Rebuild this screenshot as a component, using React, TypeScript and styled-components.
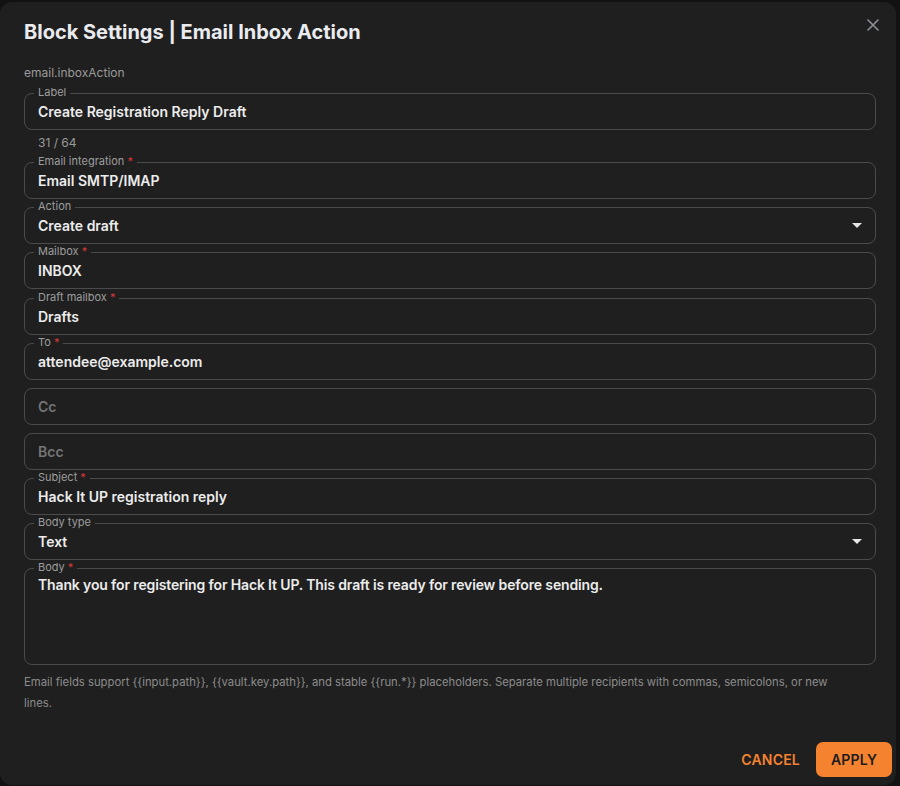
import React from "react";
import styled, { createGlobalStyle } from "styled-components";

const GlobalStyle = createGlobalStyle`
  * { box-sizing: border-box; }
  body {
    margin: 0;
    background: #121212;
    font-family: Inter, "Noto Sans", sans-serif;
  }
`;

const HELP_TEXT =
  "Email fields support {{input.path}}, {{vault.key.path}}, and stable {{run.*}} placeholders. " +
  "Separate multiple recipients with commas, semicolons, or new lines.";

interface FieldProps {
  label?: string,
  required?: boolean,
  value?: string,
  placeholder?: string,
  select?: boolean,
}

const Field: React.FC<FieldProps> = ({ label, required, value, placeholder, select }) => (
  <Box>
    {label && (
      <FloatLabel>
        {label}
        {required && <Star> *</Star>}
      </FloatLabel>
    )}
    <Input readOnly value={value ?? ""} placeholder={placeholder} />
    {select && (
      <Caret width="10" height="5" viewBox="0 0 10 5">
        <path d="M0 0 L10 0 L5 5 Z" fill="#e6e6e6" />
      </Caret>
    )}
  </Box>
)

const App: React.FC = () => {
  return (
    <Page>
      <GlobalStyle />
      <Dialog>
        <Header>
          <Title>Block Settings | Email Inbox Action</Title>
          <CloseButton aria-label="close">
            <svg width="12" height="12" viewBox="0 0 12 12">
              <path d="M1 1 L11 11 M11 1 L1 11" stroke="#8b9099" strokeWidth="1.6" strokeLinecap="round" />
            </svg>
          </CloseButton>
        </Header>
        <Content>
          <TypeId>email.inboxAction</TypeId>
          <Field label="Label" value="Create Registration Reply Draft" />
          <Counter>31 / 64</Counter>
          <Field label="Email integration" required value="Email SMTP/IMAP" />
          <Field label="Action" value="Create draft" select />
          <Field label="Mailbox" required value="INBOX" />
          <Field label="Draft mailbox" required value="Drafts" />
          <Field label="To" required value="attendee@example.com" />
          <Field placeholder="Cc" />
          <Field placeholder="Bcc" />
          <Field label="Subject" required value="Hack It UP registration reply" />
          <Field label="Body type" value="Text" select />
          <Box $multiline>
            <FloatLabel>
              Body<Star> *</Star>
            </FloatLabel>
            <TextArea
              readOnly
              value="Thank you for registering for Hack It UP. This draft is ready for review before sending."
            />
          </Box>
          <Helper>{HELP_TEXT}</Helper>
        </Content>
        <Actions>
          <TextButton>CANCEL</TextButton>
          <ApplyButton>APPLY</ApplyButton>
        </Actions>
      </Dialog>
    </Page>
  )
}

export default App

const Page = styled.div`
  padding-top: 2px;
  min-height: 786px;
`

const Dialog = styled.div`
  width: 896px;
  background: #1f1f1f;
  border-radius: 12px;
  color: #e9e9ea;
`

const Header = styled.div`
  display: flex;
  justify-content: space-between;
  align-items: flex-start;
  padding: 16px 20px 0 24px;
`

const Title = styled.h2`
  margin: 0;
  font-size: 20px;
  line-height: 28px;
  font-weight: 700;
  color: #e9ebef;
`

const CloseButton = styled.button`
  width: 28px;
  height: 28px;
  margin: -7px -11px 0 0;
  padding: 0;
  border: none;
  border-radius: 50%;
  background: transparent;
  display: flex;
  align-items: center;
  justify-content: center;
  cursor: pointer;
`

const Content = styled.div`
  display: flex;
  flex-direction: column;
  gap: 8.1px;
  padding: 19px 20px 28px 24px;
`

const TypeId = styled.div`
  font-size: 12px;
  line-height: 16px;
  color: #9a9a9a;
  margin-bottom: 4px;
`

const Counter = styled.div`
  font-size: 12px;
  line-height: 16px;
  color: #9a9a9a;
  margin: -3px 0 3px 14px;
`

const Box = styled.div<{ $multiline?: boolean }>`
  position: relative;
  display: flex;
  align-items: ${({ $multiline }) => ($multiline ? "stretch" : "center")};
  height: ${({ $multiline }) => ($multiline ? "97px" : "37px")};
  padding: 0 13px;
  border: 1px solid #4b4b4b;
  border-radius: 8px;
`

const FloatLabel = styled.span`
  position: absolute;
  top: -8px;
  left: 9px;
  padding: 0 4px;
  background: #1f1f1f;
  font-size: 11px;
  line-height: 12px;
  color: #9d9d9d;
`

const Star = styled.span`
  color: #d8393a;
`

const Input = styled.input`
  flex: 1;
  min-width: 0;
  padding: 0;
  border: none;
  outline: none;
  background: transparent;
  font-family: inherit;
  font-size: 14px;
  font-weight: 600;
  color: #ececec;

  ::placeholder {
    color: #7c7c7c;
    font-weight: 400;
  }
`

const Caret = styled.svg`
  flex: none;
  margin-left: 8px;
`

const TextArea = styled.textarea`
  flex: 1;
  padding: 6px 0 0;
  border: none;
  outline: none;
  resize: none;
  background: transparent;
  font-family: inherit;
  font-size: 14px;
  line-height: 20px;
  font-weight: 600;
  letter-spacing: -0.14px;
  color: #ececec;
`

const Helper = styled.p`
  margin: -1.5px 0 0;
  padding-right: 20px;
  font-size: 11.3px;
  line-height: 21px;
  color: #8c8c8c;
`

const Actions = styled.div`
  display: flex;
  justify-content: flex-end;
  align-items: center;
  gap: 8px;
  padding: 0 4px 8px 8px;
`

const TextButton = styled.button`
  padding: 0 8px;
  height: 35px;
  border: none;
  background: transparent;
  font-family: inherit;
  font-size: 14px;
  font-weight: 600;
  letter-spacing: 0.2px;
  color: #f5822f;
  cursor: pointer;
`

const ApplyButton = styled.button`
  width: 76px;
  height: 35px;
  border: none;
  border-radius: 7px;
  background: #f5822f;
  font-family: inherit;
  font-size: 14px;
  font-weight: 600;
  letter-spacing: 0.2px;
  color: #1c1c1c;
  cursor: pointer;
`
